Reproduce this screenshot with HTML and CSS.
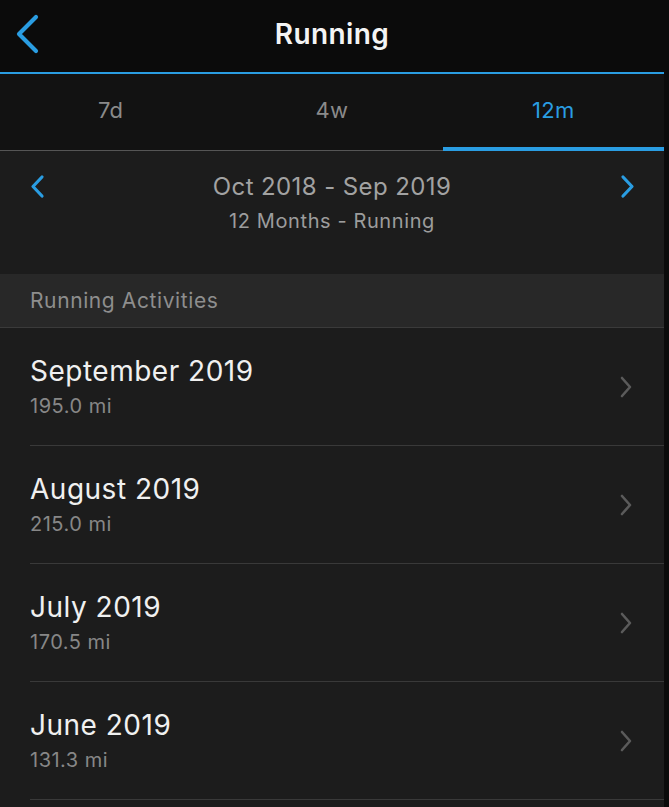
FILE: index.html
```html
<!DOCTYPE html>
<html lang="en">
<head>
  <meta charset="UTF-8" />
  <meta name="viewport" content="width=device-width, initial-scale=1.0" />
  <title>Running</title>
  <link rel="stylesheet" href="styles.css">
</head>
<body>
  <div class="app">
    <header class="nav">
      <a class="back" href="#">
        <svg width="28" height="44" viewBox="0 0 28 44"><path d="M24 5 L7 22 L24 39" fill="none" stroke="#2a9de2" stroke-width="4.2" stroke-linecap="round" stroke-linejoin="round"/></svg>
      </a>
      <h1>Running</h1>
      <span></span>
    </header>

    <nav class="tabs">
      <div class="tab">7d</div>
      <div class="tab">4w</div>
      <div class="tab active">12m</div>
    </nav>

    <section class="range">
      <svg class="arrow" width="18" height="35" viewBox="0 0 18 35"><path d="M14 8 L5 17.5 L14 27" fill="none" stroke="#2a9de2" stroke-width="3.2" stroke-linecap="round" stroke-linejoin="round"/></svg>
      <div class="range-text">
        <div class="range-title">Oct 2018 - Sep 2019</div>
        <div class="range-sub">12 Months - Running</div>
      </div>
      <svg class="arrow" width="18" height="35" viewBox="0 0 18 35"><path d="M5 8 L14 17.5 L5 27" fill="none" stroke="#2a9de2" stroke-width="3.2" stroke-linecap="round" stroke-linejoin="round"/></svg>
    </section>

    <div class="section-head">Running Activities</div>

    <ul class="list">
      <li class="row">
        <div>
          <div class="row-title">September 2019</div>
          <div class="row-sub">195.0 mi</div>
        </div>
        <svg class="chev" width="14" height="22" viewBox="0 0 14 22"><path d="M3 2 L11 11 L3 20" fill="none" stroke="#5b5b5b" stroke-width="2.6" stroke-linecap="round" stroke-linejoin="round"/></svg>
      </li>
      <li class="row">
        <div>
          <div class="row-title">August 2019</div>
          <div class="row-sub">215.0 mi</div>
        </div>
        <svg class="chev" width="14" height="22" viewBox="0 0 14 22"><path d="M3 2 L11 11 L3 20" fill="none" stroke="#5b5b5b" stroke-width="2.6" stroke-linecap="round" stroke-linejoin="round"/></svg>
      </li>
      <li class="row">
        <div>
          <div class="row-title">July 2019</div>
          <div class="row-sub">170.5 mi</div>
        </div>
        <svg class="chev" width="14" height="22" viewBox="0 0 14 22"><path d="M3 2 L11 11 L3 20" fill="none" stroke="#5b5b5b" stroke-width="2.6" stroke-linecap="round" stroke-linejoin="round"/></svg>
      </li>
      <li class="row">
        <div>
          <div class="row-title">June 2019</div>
          <div class="row-sub">131.3 mi</div>
        </div>
        <svg class="chev" width="14" height="22" viewBox="0 0 14 22"><path d="M3 2 L11 11 L3 20" fill="none" stroke="#5b5b5b" stroke-width="2.6" stroke-linecap="round" stroke-linejoin="round"/></svg>
      </li>
    </ul>
  </div>
</body>
</html>
```

FILE: styles.css
```css
body {
  margin: 0;
  padding: 0;
  font-family: 'Inter', 'Roboto', sans-serif;
  background: #0b0b0b;
  height: 100vh;
  overflow: hidden;
}

.app {
  width: 664px;
  min-height: 100vh;
  background: #1c1c1c;
}

/* top bar */
.nav {
  display: grid;
  grid-template-columns: 1fr auto 1fr;
  align-items: center;
  height: 72px;
  background: #0b0b0b;
  border-bottom: 2px solid #2a9de2;
}

.back {
  display: flex;
  padding-left: 12px;
  margin-top: -4px;
}

.nav h1 {
  margin: 0;
  font-size: 28px;
  font-weight: 600;
  letter-spacing: 0.4px;
  color: #f4f4f4;
  margin-top: -4px;
}

/* period tabs */
.tabs {
  display: flex;
  background: #121212;
}

.tab {
  flex: 1;
  height: 77px;
  box-sizing: border-box;
  display: flex;
  align-items: center;
  justify-content: center;
  font-size: 22px;
  letter-spacing: 0.3px;
  color: #8a8a8a;
  border-bottom: 1px solid #555;
  padding-bottom: 5px;
}

.tab.active {
  color: #2a9de2;
  border-bottom: 4px solid #2a9de2;
  padding-bottom: 2px;
}

/* date range */
.range {
  display: grid;
  grid-template-columns: 18px 1fr 18px;
  align-items: start;
  padding: 18px 28px 35px;
}

.range-text {
  text-align: center;
}

.range-title {
  font-size: 24px;
  line-height: 35px;
  letter-spacing: 0.4px;
  color: #a2a2a2;
}

.range-sub {
  font-size: 20px;
  line-height: 35px;
  letter-spacing: 0.6px;
  color: #9c9c9c;
}

.section-head {
  height: 53px;
  line-height: 53px;
  padding-left: 30px;
  background: #282828;
  border-bottom: 1px solid #3a3a3a;
  font-size: 21px;
  letter-spacing: 0.6px;
  color: #8e8e8e;
}

/* month list */
.list {
  list-style: none;
  margin: 0;
  padding: 0;
}

.row {
  display: flex;
  align-items: center;
  justify-content: space-between;
  margin-left: 30px;
  padding: 26px 31px 25px 0;
  border-bottom: 1px solid #393939;
}

.row-title {
  font-size: 28px;
  line-height: 34px;
  letter-spacing: 0.5px;
  color: #f0f0f0;
}

.row-sub {
  margin-top: 4px;
  font-size: 20px;
  line-height: 28px;
  letter-spacing: 0.5px;
  color: #878787;
}
```
